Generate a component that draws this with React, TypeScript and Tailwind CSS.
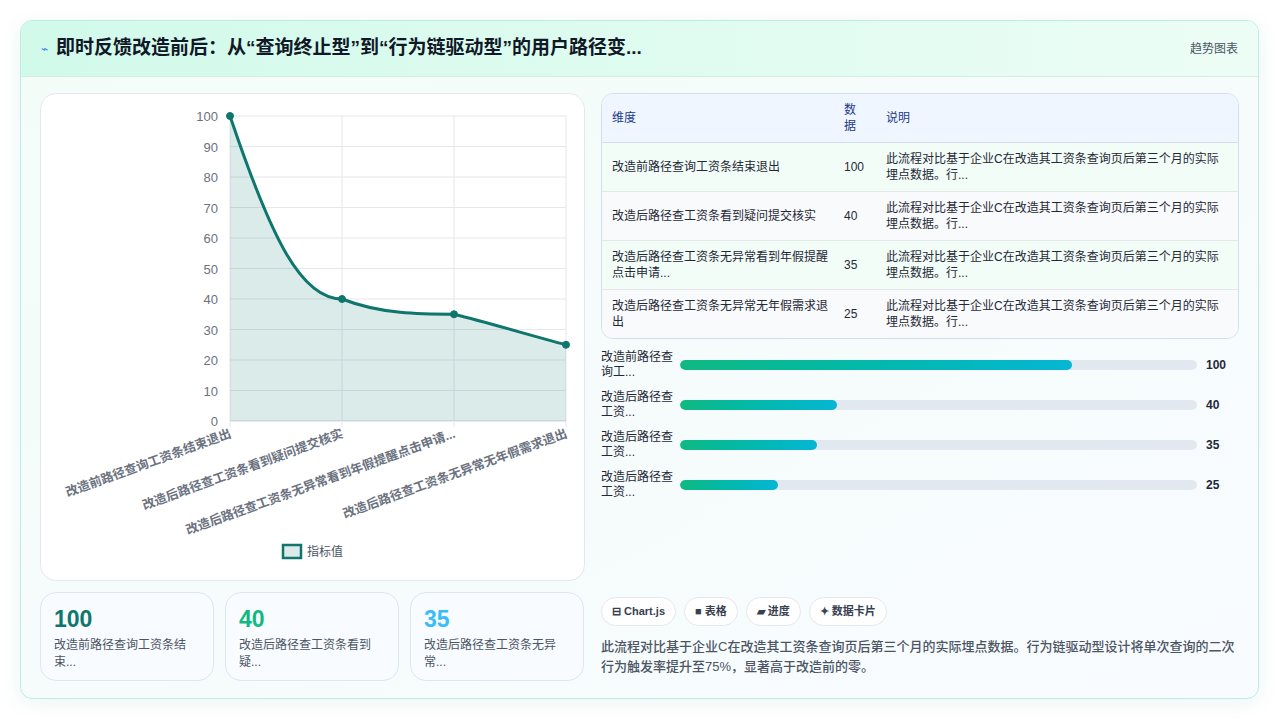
import React from "react";

const rows = [
  { label: "改造前路径查询工资条结束退出", v: 100 },
  { label: "改造后路径查工资条看到疑问提交核实", v: 40 },
  { label: "改造后路径查工资条无异常看到年假提醒点击申请...", v: 35 },
  { label: "改造后路径查工资条无异常无年假需求退出", v: 25 },
];
const desc = "此流程对比基于企业C在改造其工资条查询页后第三个月的实际埋点数据。行...";
const barLabels = ["改造前路径查询工...", "改造后路径查工资...", "改造后路径查工资...", "改造后路径查工资..."];

function Chart() {
  const xs = [189, 301, 413, 525];
  const y = (v: number) => 327 - v * 3.05;
  const pts = rows.map((r, i) => [xs[i], y(r.v)]);
  const line = `M${pts[0][0]},${pts[0][1]} C230,${y(60)} 260,${y(40)} ${pts[1][0]},${pts[1][1]} C340,${y(35)} 380,${y(35)} ${pts[2][0]},${pts[2][1]} C450,${y(32)} 490,${y(28)} ${pts[3][0]},${pts[3][1]}`;
  const labels = [
    "改造前路径查询工资条结束退出",
    "改造后路径查工资条看到疑问提交核实",
    "改造后路径查工资条无异常看到年假提醒点击申请...",
    "改造后路径查工资条无异常无年假需求退出",
  ];
  return (
    <svg width="544" height="488" className="block" style={{ fontFamily: "'Liberation Sans','Noto Sans CJK SC',sans-serif" }}>
      {[0, 10, 20, 30, 40, 50, 60, 70, 80, 90, 100].map((t) => (
        <g key={t}>
          <line x1={189} x2={525} y1={y(t)} y2={y(t)} stroke={t === 0 ? "#cbd5e1" : "#e5e7eb"} />
          <text x={177} y={y(t) + 5} textAnchor="end" fontSize="13" fill="#6b7280">{t}</text>
        </g>
      ))}
      {xs.map((x) => (
        <line key={x} x1={x} x2={x} y1={y(100)} y2={y(0) + 6} stroke="#e5e7eb" />
      ))}
      <path d={`${line} L525,${y(0)} L189,${y(0)} Z`} fill="#0f766e" fillOpacity="0.15" />
      <path d={line} fill="none" stroke="#0f766e" strokeWidth="3" />
      {pts.map(([px, py], i) => (
        <circle key={i} cx={px} cy={py} r="3.5" fill="#0f766e" stroke="#0f766e" />
      ))}
      {labels.map((l, i) => (
        <text key={i} x={xs[i] + 2} y={i % 2 === 0 ? 343 : 343} textAnchor="end" fontSize="12.5" fontWeight="700" fill="#6b7280"
          transform={`rotate(-20 ${xs[i] + 2} 343)`}>{l}</text>
      ))}
      <rect x={242} y={451} width={18} height={13} fill="#dbe9e8" stroke="#0f766e" strokeWidth="2.5" />
      <text x={266} y={462} fontSize="12" fill="#4b5563">指标值</text>
    </svg>
  );
}

export default function App() {
  return (
    <div className="w-[1280px] h-[721px] bg-white p-5" style={{ fontFamily: "'Liberation Sans','Noto Sans CJK SC',sans-serif" }}>
      <div className="h-[679px] w-[1239px] rounded-xl border border-[#b9eee0] overflow-hidden bg-gradient-to-br from-[#f3fdf8] to-[#f8fbff] shadow-[0_4px_20px_rgba(15,118,110,0.08)] flex flex-col">
        <div className="h-[56px] flex items-center justify-between px-5 bg-gradient-to-r from-[#d1faeb] to-[#ecfdf5] border-b border-[#d6ede6]">
          <div className="flex items-center gap-2">
            <span className="text-[#3b82f6] text-xs">⌁</span>
            <span className="text-[19px] font-bold text-[#111827]">即时反馈改造前后：从“查询终止型”到“行为链驱动型”的用户路径变...</span>
          </div>
          <span className="text-[12px] text-[#4b5563]">趋势图表</span>
        </div>
        <div className="flex gap-4 px-[19px] pt-4">
          <div className="w-[545px] flex flex-col gap-[11px]">
            <div className="h-[488px] rounded-2xl border border-[#e3e8ef] bg-white overflow-hidden">
              <Chart />
            </div>
            <div className="flex gap-[11px]">
              {[
                { v: "100", c: "text-[#0f766e]", t: "改造前路径查询工资条结束..." },
                { v: "40", c: "text-[#10b981]", t: "改造后路径查工资条看到疑..." },
                { v: "35", c: "text-[#38bdf8]", t: "改造后路径查工资条无异常..." },
              ].map((s) => (
                <div key={s.v} className="w-[174px] h-[89px] rounded-2xl border border-[#dde7f2] bg-[#f8fbff] px-[13px] pt-3">
                  <div className={`text-[23px] font-extrabold leading-7 ${s.c}`}>{s.v}</div>
                  <div className="text-[12px] leading-[17px] text-[#4b5563] mt-1 w-[140px]">{s.t}</div>
                </div>
              ))}
            </div>
          </div>
          <div className="flex-1 flex flex-col">
            <div className="rounded-xl border border-[#d4dfec] overflow-hidden bg-white">
              <table className="w-full text-[12px] text-[#1f2937]">
                <thead className="bg-[#eff6ff] text-[#1e3a8a]">
                  <tr className="h-[48px] border-b border-[#d4dfec]">
                    <th className="text-left font-normal pl-[10px] w-[242px]">维度</th>
                    <th className="text-left font-normal w-[42px] leading-4">数<br />据</th>
                    <th className="text-left font-normal">说明</th>
                  </tr>
                </thead>
                <tbody>
                  {rows.map((r, i) => (
                    <tr key={i} className={`h-[49px] ${i < 3 ? "border-b border-[#e5e7eb]" : ""} ${i % 2 === 0 ? "bg-[#f3fdf8]" : "bg-[#f9fafb]"}`}>
                      <td className="pl-[10px] pr-3 leading-4">{r.label === "改造后路径查工资条无异常看到年假提醒点击申请..." ? "改造后路径查工资条无异常看到年假提醒点击申请..." : r.label}</td>
                      <td>{r.v}</td>
                      <td className="pr-3 leading-4">{desc}</td>
                    </tr>
                  ))}
                </tbody>
              </table>
            </div>
            <div className="flex flex-col gap-[12px] mt-[12px]">
              {rows.map((r, i) => (
                <div key={i} className="flex items-center h-[28px]">
                  <div className="w-[79px] text-[12px] leading-[15px] text-[#1f2937] pr-1">{barLabels[i]}</div>
                  <div className="w-[517px] h-[10px] rounded-full bg-[#e2e8f0] overflow-hidden">
                    <div className="h-full rounded-full bg-gradient-to-r from-[#10b981] to-[#06b6d4]" style={{ width: `${r.v * 0.758}%` }} />
                  </div>
                  <div className="ml-[9px] text-[12px] font-bold text-[#1f2937]">{r.v}</div>
                </div>
              ))}
            </div>
            <div className="flex gap-2 mt-[98px]">
              {["⊟ Chart.js", "■ 表格", "▰ 进度", "✦ 数据卡片"].map((t) => (
                <span key={t} className="h-[29px] px-[10px] flex items-center rounded-full border border-[#e5e7eb] bg-white text-[11px] font-bold text-[#374151]">{t}</span>
              ))}
            </div>
            <p className="mt-[11px] text-[13px] leading-[20px] text-[#4b5563] font-medium">此流程对比基于企业C在改造其工资条查询页后第三个月的实际埋点数据。行为链驱动型设计将单次查询的二次行为触发率提升至75%，显著高于改造前的零。</p>
          </div>
        </div>
      </div>
    </div>
  );
}
